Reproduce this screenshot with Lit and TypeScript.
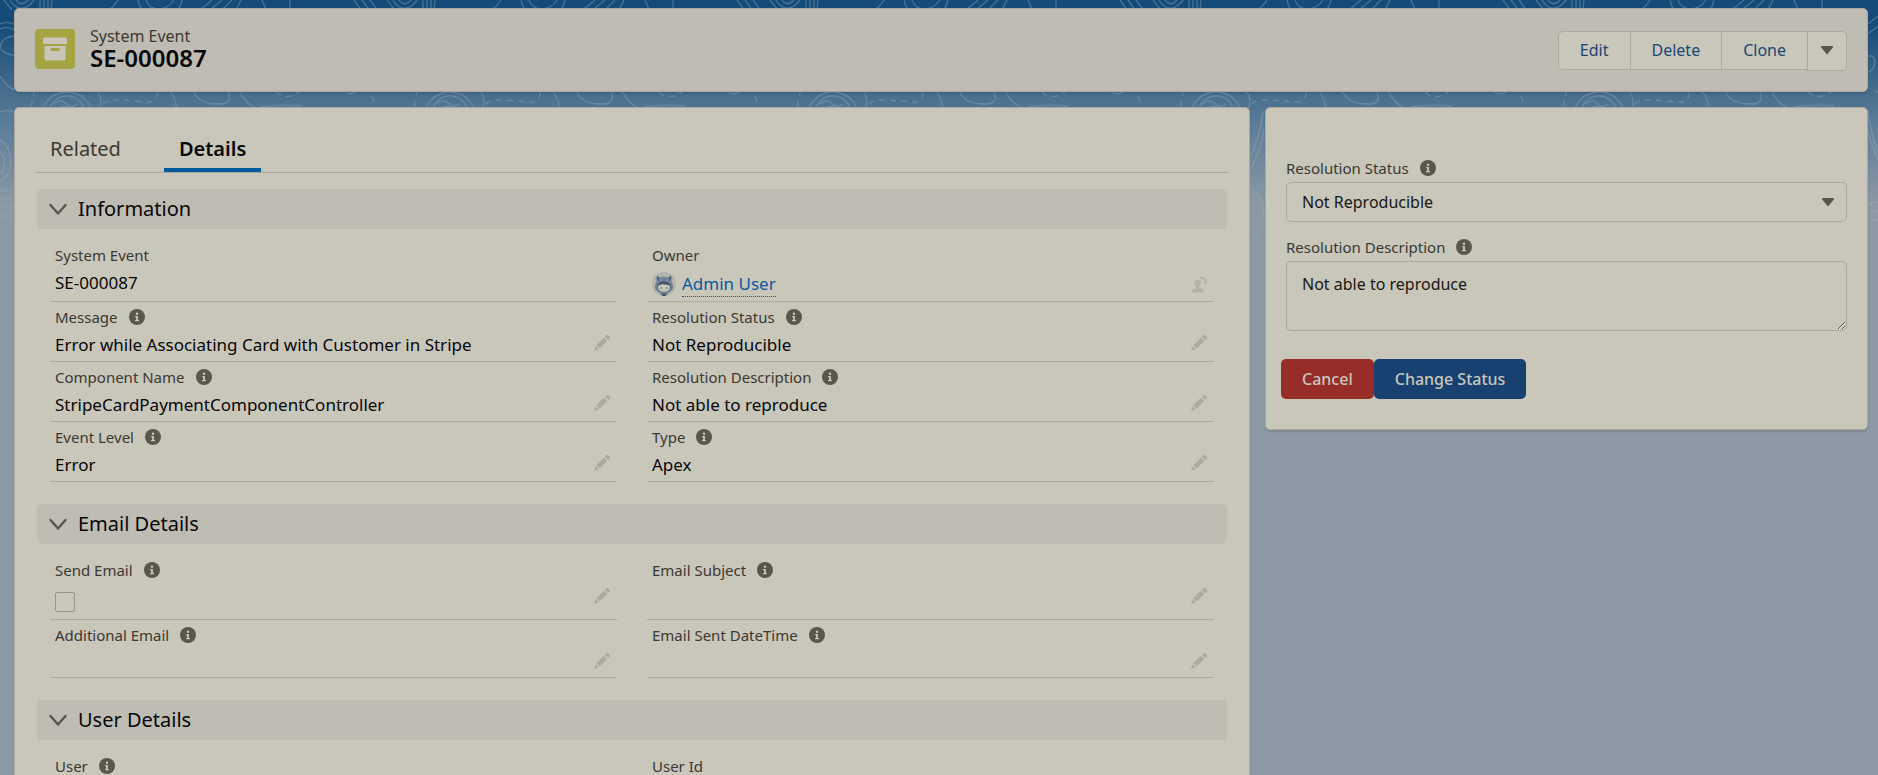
import { LitElement, html, css } from "lit";
import { customElement } from "lit/decorators.js";

interface Field {
  label: string;
  value?: string;
  info?: boolean;
  kind?: "text" | "owner" | "checkbox";
  edit?: boolean;
}
interface Section {
  title: string;
  rows: Field[][];
}

const SECTIONS: Section[] = [
  {
    title: "Information",
    rows: [
      [
        { label: "System Event", value: "SE-000087" },
        { label: "Owner", value: "Admin User", kind: "owner" },
      ],
      [
        { label: "Message", value: "Error while Associating Card with Customer in Stripe", info: true, edit: true },
        { label: "Resolution Status", value: "Not Reproducible", info: true, edit: true },
      ],
      [
        { label: "Component Name", value: "StripeCardPaymentComponentController", info: true, edit: true },
        { label: "Resolution Description", value: "Not able to reproduce", info: true, edit: true },
      ],
      [
        { label: "Event Level", value: "Error", info: true, edit: true },
        { label: "Type", value: "Apex", info: true, edit: true },
      ],
    ],
  },
  {
    title: "Email Details",
    rows: [
      [
        { label: "Send Email", info: true, edit: true, kind: "checkbox" },
        { label: "Email Subject", info: true, edit: true },
      ],
      [
        { label: "Additional Email", info: true, edit: true },
        { label: "Email Sent DateTime", info: true, edit: true },
      ],
    ],
  },
  {
    title: "User Details",
    rows: [[{ label: "User", info: true, edit: true }, { label: "User Id" }]],
  },
];

const caret = html`<svg class="caret" viewBox="0 0 14 10" aria-hidden="true"><path d="M1.2 0h11.6c.9 0 1.3.9.7 1.6L7.800 8.600c-.4.5-1.100.5-1.500 0L.5 1.600C-.1.9.3 0 1.200 0z" fill="currentColor" /></svg>`;

const infoIcon = html`<svg class="info" viewBox="0 0 16 16" role="img" aria-label="Help">
  <circle cx="8" cy="8" r="8" fill="#59564d" />
  <circle cx="8" cy="4.7" r="1.2" fill="#c9c6ba" />
  <path d="M6.200 6.900h2.700v4h1v1.300H6.100v-1.300h1V8.200h-.9z" fill="#c9c6ba" />
</svg>`;

const pencil = html`<svg class="pencil" viewBox="0 0 18 18" aria-hidden="true">
  <path d="M3.400 11.300 10.900 3.800l3.300 3.300-7.500 7.500z" fill="currentColor" />
  <path d="m11.900 2.800 1.400-1.400c.6-.6 1.500-.6 2.100 0l1.200 1.200c.6.6.6 1.500 0 2.100l-1.400 1.400z" fill="currentColor" />
  <path d="m2.700 12.200 3.100 3.100-4 1.500c-.5.2-.8-.1-.6-.6z" fill="currentColor" />
</svg>`;

@customElement("app-root")
export class AppRoot extends LitElement {
  static styles = css`
    :host {
      display: block;
      position: relative;
      height: 100vh;
      overflow: hidden;
      background: linear-gradient(#154b78 0, #154b78 24px, #5c7d98 124px, #8c98a3 204px) #8c98a3;
      font-family: "Noto Sans", "Open Sans", sans-serif;
      font-size: 16px;
      line-height: 24px;
      color: #3b3933;
    }
    * { box-sizing: border-box; }
    .pattern {
      position: absolute;
      inset: 0 0 auto 0;
      width: 100%;
      height: 240px;
    }
    .page {
      position: relative;
      display: flex;
      flex-direction: column;
      gap: 15px;
      padding: 8px 10px 0 14px;
    }
    .card {
      border: 1px solid #aca89f;
      border-radius: 5px;
      background: #c9c6ba;
      box-shadow: 0 2px 2px rgba(0, 0, 0, 0.1);
    }
    .header {
      display: flex;
      align-items: center;
      gap: 15px;
      min-height: 84px;
      padding: 0 20px 2px;
      background: #bfbcb3;
    }
    .object-icon { width: 40px; height: 40px; flex: none; }
    .heading { flex: 1; padding-bottom: 2px; }
    .eyebrow { font-size: 16px; line-height: 20px; }
    h1 { margin: 0; font-size: 24px; line-height: 24px; font-weight: 600; color: #080707; }
    .actions { display: flex; align-items: flex-start; padding-top: 3px; }
    .actions button {
      height: 39px;
      padding: 0 21px;
      margin-left: -1px;
      border: 1px solid #aca99d;
      background: #c9c6ba;
      color: #1c4675;
      font: inherit;
    }
    .actions button:first-child { border-radius: 5px 0 0 5px; }
    .actions .more { height: 40px; padding: 0 12px; border-radius: 0 5px 5px 0; color: #59564d; }
    .caret { width: 14px; height: 9px; display: block; color: #59564d; }
    .columns { display: grid; grid-template-columns: 1236fr 603fr; gap: 15px; align-items: start; }
    .record { padding: 10px 20px; }
    .tabs { display: flex; gap: 28px; border-bottom: 1px solid #aca99d; }
    .tabs a {
      height: 54px;
      padding: 0 15px;
      line-height: 61px;
      font-size: 20px;
      color: #3b3933;
      text-decoration: none;
    }
    .tabs .active { color: #080707; font-weight: 600; border-bottom: 4px solid #005a9e; }
    .section { padding: 0 2px 6px; }
    .section h2 { display: flex; margin: 16px 0 11px; font-weight: 400; }
    .section h2 button {
      display: flex;
      flex: 1;
      align-items: center;
      gap: 11px;
      height: 40px;
      padding: 0 12px;
      border: 0;
      border-radius: 5px;
      background: #bfbcb3;
      font: inherit;
      font-size: 20px;
      color: #080707;
    }
    .chevron { width: 18px; height: 12px; }
    .row { display: grid; grid-template-columns: 1fr 1fr; gap: 30px; padding: 0 13px; }
    .field {
      position: relative;
      display: flex;
      flex-direction: column;
      padding: 3px 5px 0;
      border-bottom: 1px solid #aca99d;
    }
    .label { display: flex; align-items: center; gap: 11px; font-size: 15px; line-height: 24px; }
    .info { width: 16px; height: 16px; flex: none; }
    .value { height: 32px; display: flex; align-items: center; color: #080707; font-size: 17px; }
    .value.empty { height: 30px; }
    .value.owner { height: 34px; }
    .value.check { height: 37px; padding-top: 10px; align-items: flex-start; }
    .value input { appearance: none; width: 20px; height: 20px; margin: 0; border: 1px solid #98958b; border-radius: 2px; }
    .value a { color: #0b5a9d; border-bottom: 1px dotted #0b5a9d; text-decoration: none; }
    .avatar { width: 24px; height: 24px; margin-right: 6px; }
    .edit { position: absolute; right: 6px; top: 32px; padding: 0; border: 0; background: none; color: #aca99d; }
    .edit.change { top: 36px; }
    .pencil { display: block; width: 18px; height: 18px; }
    .side { padding: 48px 20px 30px; }
    .side .label { margin-bottom: 2px; }
    .control {
      display: block;
      width: 100%;
      border: 1px solid #aca99d;
      border-radius: 5px;
      background: #c9c6ba;
      color: #181712;
      font: inherit;
    }
    .select { position: relative; margin-bottom: 13px; }
    .select .caret { position: absolute; right: 12px; top: 16px; pointer-events: none; }
    select.control { appearance: none; height: 40px; padding: 0 15px; }
    textarea.control { height: 70px; padding: 10px 15px; line-height: 24px; }
    .buttons { display: flex; margin: 28px 0 0 -5px; }
    .buttons button {
      height: 40px;
      padding: 0 21px;
      border: 0;
      border-radius: 5px;
      color: #c9c6ba;
      background: #174170;
      font: inherit;
      font-weight: 500;
    }
    .buttons .cancel { background: #982c29; }
  `;

  private renderPattern() {
    return html`<svg class="pattern" aria-hidden="true">
      <defs>
        <pattern id="topo" width="383" height="240" patternUnits="userSpaceOnUse">
          <g fill="none" stroke="#8fa5b6" stroke-opacity=".42" stroke-width="1.300">
            <path d="M10 0c6 11 16 11 24 0M16 0c3 5 8 5 12 0M4 0l8 10M40 0v10M44 0v10M48 0v10M52 0l-1 10M118 0c-3 5-7 9-12 12M146 0c4 12 20 12 28 0M200 10l12-10M210 10l12-10M222 10l10-10M236 10l5-10M262 0l6 14M290 0v12M354 0l10 14M362 0l10 14M370 0l8 11" />
            <circle cx="160" cy="-3" r="22" />
            <circle cx="67" cy="118" r="26" /><circle cx="67" cy="114" r="18" />
            <path d="M54 104c4-4 8-4 11-1 4 4 8 4 12 1M60 107c6-2 9 1 13 0M98 92c6 10 2 18-4 24M170 91c7 10 8 19 4 27M194 92c4 10 14 12 26 12 9 0 11-5 8-12M240 92c4 9 10 14 18 17M262 107c10-2 32-2 40-1" />
            <path stroke-dasharray="6 5" d="M35 90c-4 10-4 20-2 30M103 104c6-8 30-2 45-2 8 0 9-4 9-11M276 92c7 7 18 5 23 0M372 96c4 8 2 16-2 24" />
            <path d="M344 90c3 5 10 5 15 0" />
          </g>
        </pattern>
      </defs>
      <rect width="100%" height="108" fill="url(#topo)" />
      <g fill="none" stroke="#9fb0bd" stroke-opacity=".38" stroke-width="1.300">
        <path d="M0 24c8-3 14-1 20 4M0 29c8-3 14-1 18 5M14 36C-4 38-4 54 14 55M0 76c4 6 8 11 14 14M0 112c5-2 9-2 14 0M0 140c14 8 14 34 0 42M0 152c6 6 6 16 0 22M0 192c5-3 9-3 14 0M0 200c5-3 9-3 14 0M0 208c5-3 9-3 14 0M0 216h14" />
        <path d="M1251 155c6-12 10-27 12-44M1250 170c8-14 12-27 14-40M1251 190c12 4 14 18 12 30M1250 242l12-12" />
        <path d="M1868 24l10-8M1868 34l10-8M1868 56c8-2 10 12 0 16M1868 112c2 16 6 30 10 42M1868 130c2 10 5 19 10 30M1868 205c4-3 6-3 10-3M1868 214c4-3 6-3 10-3M1868 223c4-3 6-3 10-3" />
      </g>
    </svg>`;
  }

  private renderValue(f: Field, id: string) {
    if (f.kind === "checkbox") return html`<div class="value check"><input type="checkbox" id=${id} /></div>`;
    if (f.kind === "owner")
      return html`<div class="value owner">
        <svg class="avatar" viewBox="0 0 24 24" aria-hidden="true">
          <circle cx="12" cy="12" r="12" fill="#b3b4ab" />
          <path d="M4.500 4.500c0-1 .8-1.200 1.400-.6l2 1.700c2.600-1 5.600-1 8.200 0l2-1.700c.6-.6 1.400-.4 1.400.6v5.500c1 1.600 1.600 3 1.600 4.800 0 4-4 6.700-9.100 6.700s-9.100-2.700-9.100-6.700c0-1.800.6-3.200 1.600-4.800z" fill="#72829a" />
          <path d="M5.300 4.400l2 1.900-1.800 2zM18.700 4.400l-2 1.900 1.800 2z" fill="#3f4d64" />
          <ellipse cx="12" cy="14.400" rx="6.800" ry="5.200" fill="#47556b" />
          <ellipse cx="12" cy="15.200" rx="6" ry="4.500" fill="#c9c6ba" />
          <path d="M6.200 13.500c1.500-1.300 3.500-.5 4.800-1.600 2 1.500 5 .2 6.800 1.600l-1.500-2.600c-2.500-1.600-6-1.600-8.500 0z" fill="#47556b" />
          <circle cx="9.300" cy="15.900" r="1" fill="#7b8898" /><circle cx="14.700" cy="15.900" r="1" fill="#7b8898" />
          <path d="M8 22.500c1-2 7-2 8 0-2 1.500-6 1.500-8 0z" fill="#6b7c93" /><path d="M10.500 21.500h3V24h-3z" fill="#3b4a60" />
        </svg><a href="#owner">${f.value}</a></div>`;
    return html`<div class="value ${f.value ? "" : "empty"}">${f.value ?? ""}</div>`;
  }

  private renderField(f: Field, id: string) {
    return html`<div class="field">
      <div class="label">
        ${f.kind === "checkbox" ? html`<label for=${id}>${f.label}</label>` : html`<span>${f.label}</span>`}
        ${f.info ? infoIcon : ""}
      </div>
      ${this.renderValue(f, id)}
      ${f.edit ? html`<button class="edit" aria-label="Edit ${f.label}">${pencil}</button>` : ""}
      ${f.kind === "owner"
        ? html`<button class="edit change" aria-label="Change Owner"><svg class="pencil" viewBox="0 0 18 18" fill="currentColor" opacity=".7">
            <ellipse cx="7.500" cy="7.200" rx="3.100" ry="3.700" />
            <path d="M5.900 9.500h3.200v2.400l3.200 1.400c.8.4 1 1 1 2.200 0 .6-.3.9-.9.9H2.600c-.6 0-.9-.3-.9-.9 0-1.200.2-1.800 1-2.200l3.200-1.400z" />
            <path d="M12 .8v2.100c2.100.2 3 1.400 3 3.300h1.500c0-3-1.600-4.700-4.500-5.400z" /><path d="M10 2l2.600-2v4zM13.700 5.800h3.800l-1.900 2.600z" />
          </svg></button>`
        : ""}
    </div>`;
  }

  render() {
    return html`
      ${this.renderPattern()}
      <main class="page">
        <header class="card header">
          <svg class="object-icon" viewBox="0 0 40 40" aria-hidden="true">
            <rect width="40" height="40" rx="4" fill="#a5a442" />
            <rect x="8" y="8.500" width="24" height="6.500" rx="1.500" fill="#c9c6ba" />
            <path d="M9.500 17h21v12.500a2 2 0 0 1-2 2h-17a2 2 0 0 1-2-2z" fill="#c9c6ba" />
            <rect x="15.500" y="19" width="9" height="3" rx="1" fill="#a5a442" />
          </svg>
          <div class="heading">
            <div class="eyebrow">System Event</div>
            <h1>SE-000087</h1>
          </div>
          <div class="actions">
            <button>Edit</button><button>Delete</button><button>Clone</button>
            <button class="more" aria-label="More actions">${caret}</button>
          </div>
        </header>
        <div class="columns">
          <section class="card record">
            <nav class="tabs"><a href="#related">Related</a><a class="active" href="#details">Details</a></nav>
            ${SECTIONS.map(
              (s, i) => html`<div class="section">
                <h2><button aria-expanded="true">
                  <svg class="chevron" viewBox="0 0 18 12" aria-hidden="true"><path d="M1.500 2 9 10.500 16.500 2" fill="none" stroke="#59564d" stroke-width="2.400" stroke-linecap="round" stroke-linejoin="round" /></svg>
                  ${s.title}</button></h2>
                ${s.rows.map((r, j) => html`<div class="row">${r.map((f, k) => this.renderField(f, `f-${i}-${j}-${k}`))}</div>`)}
              </div>`
            )}
          </section>
          <form class="card side">
            <div class="label"><label for="status">Resolution Status</label>${infoIcon}</div>
            <div class="select">
              <select id="status" class="control"><option>Not Reproducible</option></select>${caret}
            </div>
            <div class="label"><label for="description">Resolution Description</label>${infoIcon}</div>
            <textarea id="description" class="control" .value=${"Not able to reproduce"}></textarea>
            <div class="buttons">
              <button type="button" class="cancel">Cancel</button><button type="button">Change Status</button>
            </div>
          </form>
        </div>
      </main>
    `;
  }
}
